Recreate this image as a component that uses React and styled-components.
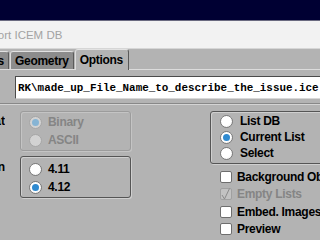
import styled, { createGlobalStyle } from "styled-components";

const GlobalStyle = createGlobalStyle`
  html, body {
    margin: 0;
    padding: 0;
    background: #b3b3b3;
    overflow: hidden;
  }
  * {
    box-sizing: border-box;
  }
`;

const Screen = styled.div`
  width: 320px;
  height: 240px;
  overflow: hidden;
  display: flex;
  flex-direction: column;
  background: #b3b3b3;
  font-family: "Liberation Sans", Arial, sans-serif;
`;

const Desktop = styled.div`
  height: 21px;
  flex-shrink: 0;
  background: #000033;
  border-bottom: 1px solid #6a6a80;
`;

const TitleBar = styled.div`
  height: 27px;
  flex-shrink: 0;
  display: flex;
  align-items: center;
  background: #f2f2f2;
  overflow: hidden;
`;

const Title = styled.span`
  margin-left: -22px;
  font-size: 11.5px;
  color: #a3a3a3;
  white-space: nowrap;
`;

const TabStrip = styled.div`
  height: 22px;
  flex-shrink: 0;
  display: flex;
  align-items: flex-end;
  border-top: 1px solid #d6d6d6;
  border-bottom: 1px solid #dcdcdc;
  gap: 1px;
`;

const TabClip = styled.div`
  width: 9px;
  display: flex;
  justify-content: flex-end;
  overflow: hidden;
  flex-shrink: 0;
`;

const Tab = styled.div`
  height: ${(p) => (p.$active ? "21px" : "18px")};
  margin-bottom: ${(p) => (p.$active ? "-1px" : "0")};
  padding: 0 ${(p) => (p.$active ? "5px" : "4px")} 0 4px;
  display: flex;
  align-items: center;
  flex-shrink: 0;
  background: ${(p) => (p.$active ? "#b3b3b3" : "#8c8c8c")};
  border: 1px solid #5a5a5a;
  border-top-color: #e2e2e2;
  border-left-color: #dcdcdc;
  border-bottom: none;
  border-radius: 3px 3px 0 0;
  font-size: 12px;
  font-weight: bold;
  letter-spacing: -0.3px;
  color: #000;
  white-space: nowrap;
`;

const Pane = styled.div`
  flex: 1;
  display: flex;
  flex-direction: column;
`;

const FileInput = styled.div`
  margin: 6px 0 0 15px;
  width: 340px;
  height: 23px;
  flex-shrink: 0;
  display: flex;
  align-items: center;
  padding-left: 2px;
  background: #fff;
  border: 1px solid #d8d8d8;
  border-top-color: #4a4a4a;
  border-left-color: #4a4a4a;
  font-family: "Liberation Mono", "Courier New", monospace;
  font-size: 10.9px;
  font-weight: bold;
  color: #000;
  white-space: nowrap;
  overflow: hidden;
`;

const Separator = styled.div`
  margin-top: 4px;
  height: 2px;
  border-top: 1px solid #888;
  border-bottom: 1px solid #d4d4d4;
`;

const Body = styled.div`
  display: flex;
  padding-top: 6px;
`;

const LeftColumn = styled.div`
  width: 210px;
  flex-shrink: 0;
  display: flex;
  flex-direction: column;
  gap: 5px;
`;

const FieldRow = styled.div`
  display: flex;
  align-items: flex-start;
`;

const SideLabel = styled.div`
  width: 5px;
  margin-right: 15px;
  padding-top: ${(p) => p.$top}px;
  display: flex;
  justify-content: flex-end;
  overflow: hidden;
  font-size: 12px;
  font-weight: bold;
  color: #000;
  white-space: nowrap;
`;

const GroupBox = styled.div`
  width: ${(p) => p.$width}px;
  flex-shrink: 0;
  padding: ${(p) => p.$pad};
  border: 1px solid ${(p) => (p.$disabled ? "#9c9c9c" : "#555")};
  border-radius: 3px;
  box-shadow: 1px 1px 0 ${(p) => (p.$disabled ? "#c4c4c4" : "#cfcfcf")},
    inset 1px 1px 0 ${(p) => (p.$disabled ? "#c4c4c4" : "#cfcfcf")};
`;

const RightColumn = styled.div`
  display: flex;
  flex-direction: column;
`;

const OptionRow = styled.div`
  height: ${(p) => p.$h}px;
  display: flex;
  align-items: center;
  gap: ${(p) => p.$gap}px;
  font-size: 12px;
  font-weight: bold;
  letter-spacing: -0.3px;
  color: ${(p) => (p.$disabled ? "#858585" : "#000")};
  white-space: nowrap;
`;

const RadioDot = styled.span`
  width: 13px;
  height: 13px;
  flex-shrink: 0;
  border-radius: 50%;
  display: flex;
  align-items: center;
  justify-content: center;
  border: 1px solid ${(p) => (p.$disabled ? "#a6a6a6" : "#7a7a7a")};
  background: ${(p) =>
    p.$disabled
      ? "#d2d2d2"
      : "radial-gradient(circle at 40% 35%, #ffffff 55%, #e4e4e4 100%)"};
  &::after {
    content: "";
    width: 7px;
    height: 7px;
    border-radius: 50%;
    display: ${(p) => (p.$checked ? "block" : "none")};
    background: ${(p) => (p.$disabled ? "#86b4d4" : "#2f8ad0")};
  }
`;

const CheckList = styled.div`
  margin: 4px 0 0 10px;
  display: flex;
  flex-direction: column;
`;

const CheckBox = styled.span`
  width: 12px;
  height: 12px;
  flex-shrink: 0;
  display: flex;
  align-items: center;
  justify-content: center;
  border: 1px solid ${(p) => (p.$disabled ? "#a0a0a0" : "#6e6e6e")};
  border-radius: 2px;
  background: ${(p) => (p.$disabled ? "#c2c2c2" : "#fff")};
`;

const Radio = ({ label, checked, disabled, h, gap }) => (
  <OptionRow $h={h} $gap={gap} $disabled={disabled}>
    <RadioDot $checked={checked} $disabled={disabled} />
    {label}
  </OptionRow>
);

const Check = ({ label, checked, disabled }) => (
  <OptionRow $h={17.5} $gap={5} $disabled={disabled}>
    <CheckBox $disabled={disabled}>
      {checked && (
        <svg width="10" height="12" viewBox="0 0 10 12">
          <path
            d="M1 7 L3.5 11 L8.5 0.5"
            fill="none"
            stroke="#8a8a8a"
            strokeWidth="1"
          />
        </svg>
      )}
    </CheckBox>
    {label}
  </OptionRow>
);

export default function App() {
  return (
    <Screen>
      <GlobalStyle />
      <Desktop />
      <TitleBar>
        <Title>Export ICEM DB</Title>
      </TitleBar>
      <TabStrip>
        <TabClip>
          <Tab>Files</Tab>
        </TabClip>
        <Tab>Geometry</Tab>
        <Tab $active>Options</Tab>
      </TabStrip>
      <Pane>
        <FileInput>RK\made_up_File_Name_to_describe_the_issue.ice</FileInput>
        <Separator />
        <Body>
          <LeftColumn>
            <FieldRow>
              <SideLabel $top={3}>Format</SideLabel>
              <GroupBox $width={111} $pad="1px 0 1px 8px" $disabled>
                <Radio label="Binary" h={18} gap={6} checked disabled />
                <Radio label="ASCII" h={18} gap={6} disabled />
              </GroupBox>
            </FieldRow>
            <FieldRow>
              <SideLabel $top={4}>Version</SideLabel>
              <GroupBox $width={111} $pad="3px 0 1px 8px">
                <Radio label="4.11" h={18} gap={6} />
                <Radio label="4.12" h={18} gap={6} checked />
              </GroupBox>
            </FieldRow>
          </LeftColumn>
          <RightColumn>
            <GroupBox $width={130} $pad="1px 0 2px 9px">
              <Radio label="List DB" h={16} gap={7} />
              <Radio label="Current List" h={16} gap={7} checked />
              <Radio label="Select" h={16} gap={7} />
            </GroupBox>
            <CheckList>
              <Check label="Background Objects" />
              <Check label="Empty Lists" checked disabled />
              <Check label="Embed. Images" />
              <Check label="Preview" />
            </CheckList>
          </RightColumn>
        </Body>
      </Pane>
    </Screen>
  );
}
